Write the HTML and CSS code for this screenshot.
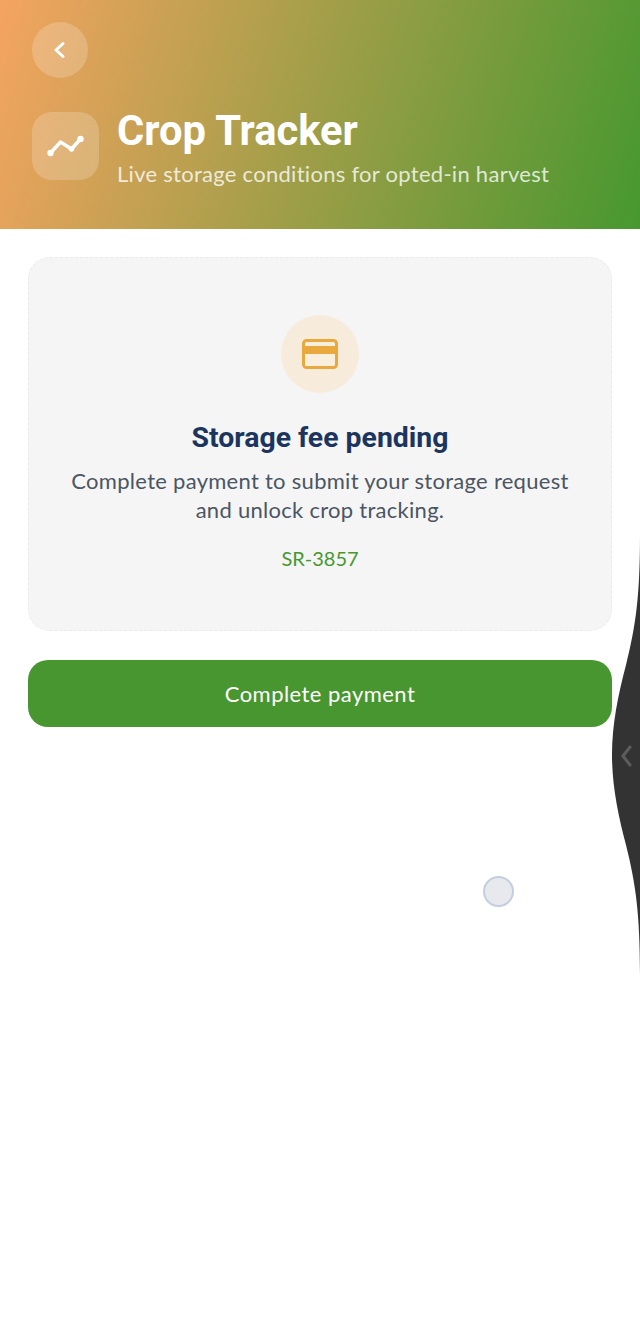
FILE: index.html
```html
<!DOCTYPE html>
<html lang="en">

<head>
    <meta charset="UTF-8">
    <meta name="viewport" content="width=device-width, initial-scale=1.0">
    <title>Crop Tracker</title>
    <link rel="stylesheet" href="styles.css">
</head>

<body>
    <header class="hero">
        <button class="back-btn" type="button" aria-label="Back">
            <svg width="16" height="20" viewBox="0 0 16 20">
                <path d="M11 3.5 L4 10 L11 16.5" fill="none" stroke="#fff" stroke-width="3" stroke-linecap="round" stroke-linejoin="round" />
            </svg>
        </button>
        <div class="hero-row">
            <div class="hero-icon">
                <svg width="38" height="26" viewBox="0 0 38 26">
                    <path d="M3.5 20 L13.5 9 L24.5 16 L33.5 6" fill="none" stroke="#fff" stroke-width="3.5" stroke-linecap="round" stroke-linejoin="round" />
                    <circle cx="3.5" cy="20" r="3.2" fill="#fff" />
                    <circle cx="24.5" cy="16" r="2.8" fill="#fff" />
                    <circle cx="33.5" cy="6" r="3.2" fill="#fff" />
                </svg>
            </div>
            <div class="hero-text">
                <h1>Crop Tracker</h1>
                <p>Live storage conditions for opted-in harvest</p>
            </div>
        </div>
    </header>

    <main class="content">
        <section class="notice">
            <div class="notice-icon">
                <svg width="36" height="30" viewBox="0 0 36 30">
                    <rect x="1.5" y="1.5" width="33" height="27" rx="3" fill="#f9efdd" stroke="#e9a93f" stroke-width="3" />
                    <rect x="1.5" y="7" width="33" height="8" fill="#e9a93f" />
                </svg>
            </div>
            <h2>Storage fee pending</h2>
            <p>Complete payment to submit your storage request and unlock crop tracking.</p>
            <span class="ref">SR-3857</span>
        </section>
        <button class="pay-btn" type="button">Complete payment</button>
    </main>

    <svg class="edge" width="28" height="440" viewBox="0 0 28 440">
        <path d="M28 0 C28 60 24 90 14 130 C6 160 0 190 0 220 C0 250 6 280 14 310 C24 350 28 380 28 440 Z" fill="#333333" />
        <path d="M18 212 L11 221 L18 230" fill="none" stroke="#5c5c5c" stroke-width="3" stroke-linecap="round" stroke-linejoin="round" />
    </svg>
    <div class="touch"></div>
</body>

</html>
```

FILE: styles.css
```css
* {
    box-sizing: border-box;
}

body {
    margin: 0;
    width: 640px;
    height: 1344px;
    position: relative;
    overflow: hidden;
    background-color: #ffffff;
    font-family: "Lato", sans-serif;
}

.hero {
    height: 229px;
    padding: 22px 32px 0;
    background: linear-gradient(106deg, #f4a460 0%, #47982f 100%);
}

.back-btn {
    display: flex;
    align-items: center;
    justify-content: center;
    width: 56px;
    height: 56px;
    padding: 0;
    border: none;
    border-radius: 50%;
    background-color: rgba(255, 255, 255, 0.2);
}

.hero-row {
    display: flex;
    align-items: flex-start;
    gap: 18px;
    margin-top: 31px;
}

.hero-icon {
    display: flex;
    align-items: center;
    justify-content: center;
    width: 67px;
    height: 68px;
    margin-top: 3px;
    border-radius: 20px;
    background-color: rgba(255, 255, 255, 0.2);
}

.hero-text h1 {
    margin: 0;
    font-family: "Roboto", sans-serif;
    font-size: 41.7px;
    line-height: 44px;
    font-weight: 700;
    color: #ffffff;
}

.hero-text p {
    margin: 7px 0 0;
    font-size: 22px;
    line-height: 28px;
    letter-spacing: 0.28px;
    color: rgba(255, 255, 255, 0.8);
}

.content {
    padding: 28px 28px 0;
}

.notice {
    display: flex;
    flex-direction: column;
    align-items: center;
    height: 374px;
    padding: 57px 30px 0;
    border: 1.5px dashed #ebebeb;
    border-radius: 22px;
    background-color: #f5f5f6;
    text-align: center;
}

.notice-icon {
    display: flex;
    align-items: center;
    justify-content: center;
    width: 78px;
    height: 78px;
    border-radius: 50%;
    background-color: #f7ecdc;
}

.notice h2 {
    margin: 28px 0 0;
    font-family: "Roboto", sans-serif;
    font-size: 28.4px;
    line-height: 34px;
    font-weight: 700;
    color: #1c355e;
}

.notice p {
    margin: 11px 0 0;
    font-size: 22px;
    line-height: 29px;
    letter-spacing: 0.28px;
    color: #4b5563;
}

.ref {
    margin-top: 20px;
    font-size: 20px;
    line-height: 28px;
    color: #47982f;
}

.pay-btn {
    display: block;
    width: 100%;
    height: 67px;
    margin-top: 29px;
    border: none;
    border-radius: 20px;
    background-color: #47962f;
    font-family: "Lato", sans-serif;
    font-size: 22px;
    letter-spacing: 0.45px;
    color: #ffffff;
}

/* system back gesture + touch dot */
.edge {
    position: absolute;
    right: 0;
    top: 535px;
}

.touch {
    position: absolute;
    left: 483px;
    top: 876px;
    width: 31px;
    height: 31px;
    border: 2px solid #c4cde2;
    border-radius: 50%;
    background-color: #e8e9ec;
}
```
